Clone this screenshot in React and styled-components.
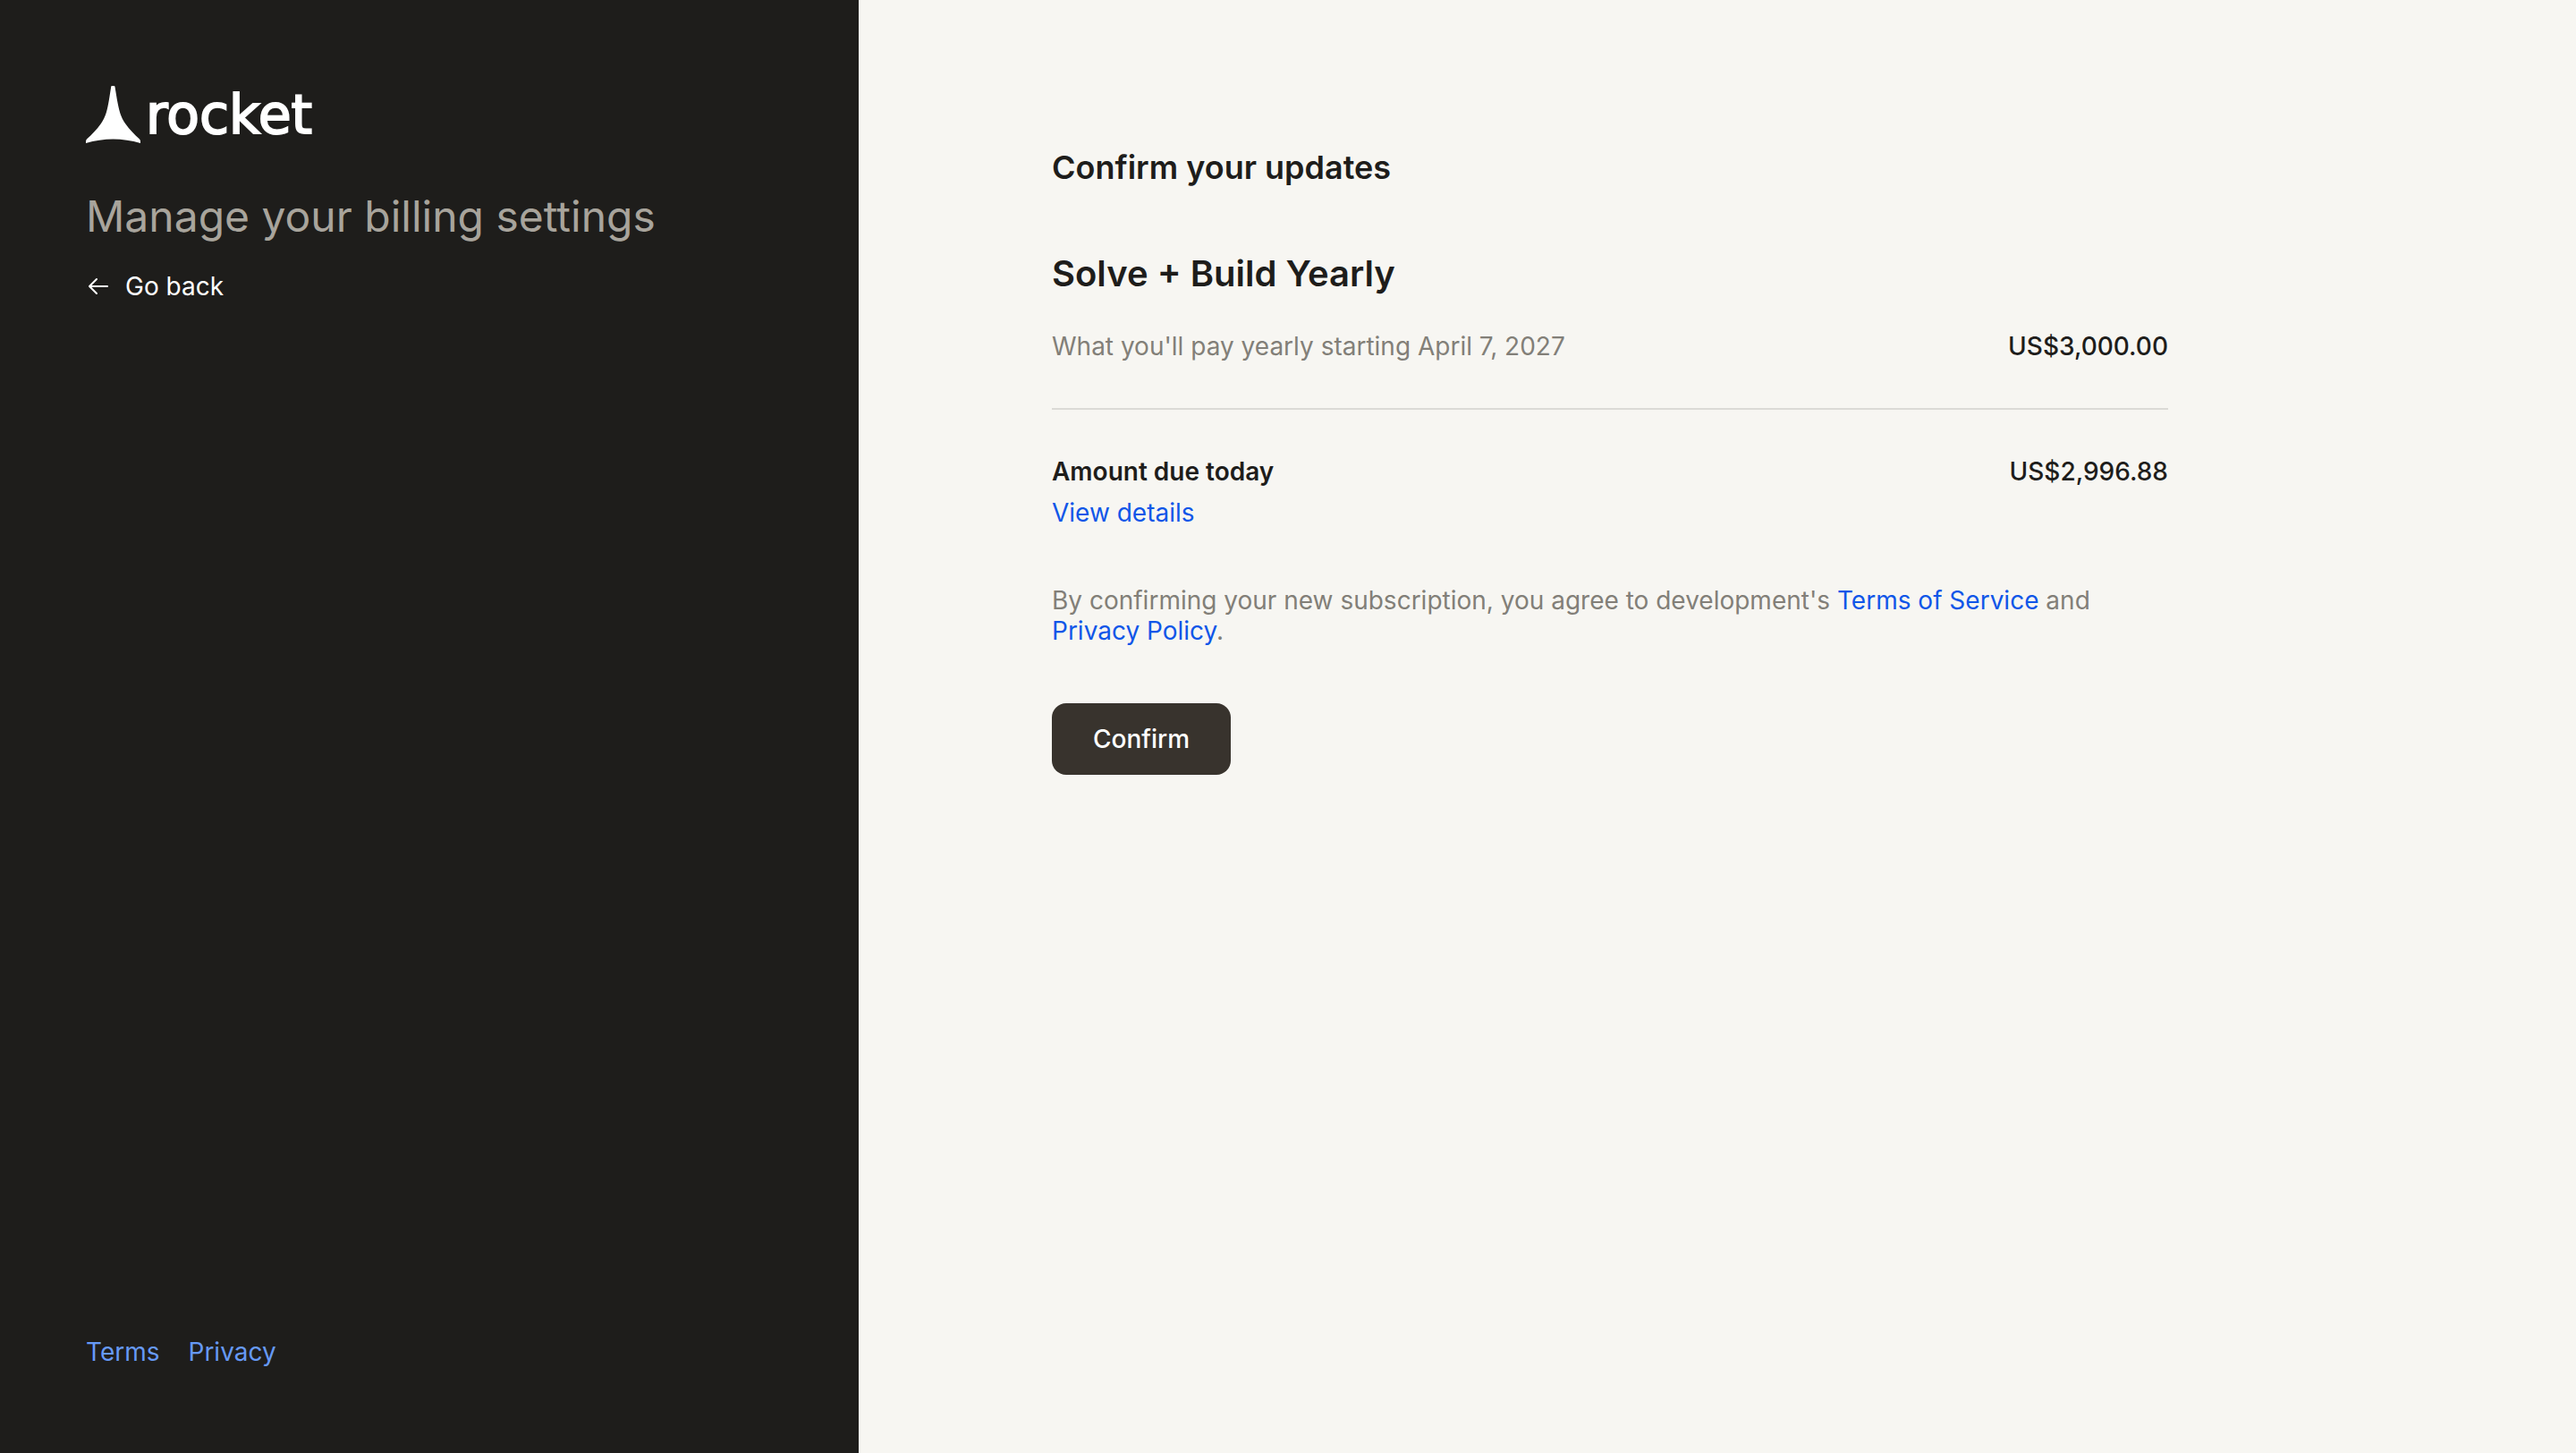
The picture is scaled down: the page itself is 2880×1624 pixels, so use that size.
import React from "react";
import styled, { createGlobalStyle } from "styled-components";

const GlobalStyle = createGlobalStyle`
  *, *::before, *::after { box-sizing: border-box; }
  body {
    margin: 0;
    background: #f7f6f2;
    color: #1e1d1b;
    font-family: Inter, "Liberation Sans", sans-serif;
    font-size: 28px;
    line-height: 34px;
  }
  h1, h2, p, dl, dt, dd { margin: 0; }
`;

const Page = styled.div`
  display: grid;
  grid-template-columns: 1fr 2fr;
  min-height: 100vh;
`;

const Sidebar = styled.aside`
  display: flex;
  flex-direction: column;
  align-items: flex-start;
  padding: 96px;
  background: #1e1d1b;
  color: #ffffff;
`;

const Brand = styled.div`
  display: flex;
  align-items: center;
  gap: 6px;
  height: 64px;
`;

const BrandName = styled.span`
  font-family: "DejaVu Sans", sans-serif;
  font-size: 60px;
  line-height: 64px;
  -webkit-text-stroke: 2px currentColor;
`;

const SidebarTitle = styled.h1`
  margin-top: 53px;
  color: #a8a49c;
  font-size: 48px;
  font-weight: 400;
  line-height: 58px;
`;

const Link = styled.a`
  color: ${({ $onDark }) => ($onDark ? "#6699f5" : "#1056e8")};
  text-decoration: none;
`;

const BackLink = styled.a`
  display: flex;
  align-items: center;
  gap: 16px;
  margin-top: 32px;
  color: #ffffff;
  text-decoration: none;
`;

const SidebarFooter = styled.footer`
  display: flex;
  gap: 32px;
  margin-top: auto;
`;

const Main = styled.main`
  padding: 164px 0 96px 216px;
`;

const Content = styled.div`
  width: 100%;
  max-width: 1248px;
`;

const Heading = styled.h2`
  font-size: 36px;
  font-weight: 600;
  line-height: 46px;
`;

const PlanName = styled.h2`
  margin: 72px 0 40px;
  font-size: 40px;
  font-weight: 600;
  line-height: 48px;
`;

const PriceRow = styled.dl`
  display: flex;
  justify-content: space-between;
`;

const Label = styled.dt`
  color: ${({ $strong }) => ($strong ? "#1e1d1b" : "#827f78")};
  font-weight: ${({ $strong }) => ($strong ? 600 : 400)};
`;

const Amount = styled.dd`
  font-weight: 500;
`;

const Divider = styled.hr`
  height: 2px;
  margin: 52px 0;
  border: 0;
  background: #dbdad6;
`;

const DetailsButton = styled.button`
  display: block;
  margin: 12px 0 64px;
  padding: 0;
  border: 0;
  background: none;
  color: #1056e8;
  font: inherit;
  cursor: pointer;
`;

const Agreement = styled.p`
  color: #827f78;
`;

const ConfirmButton = styled.button`
  width: 200px;
  height: 80px;
  margin-top: 64px;
  border: 0;
  border-radius: 16px;
  background: #38332d;
  color: #ffffff;
  font: inherit;
  font-weight: 500;
  cursor: pointer;
`;

function RocketMark() {
  return (
    <svg width="61" height="64" viewBox="0 0 61 64" fill="#ffffff" aria-hidden="true">
      <path d="M29 0H31.6Q32.3 0 32.5 1L34.8 15C37 27 39 35 44 42C49 49 54 54 60 59.5Q61 60.5 61 62V64C41 58 20 58 0 64V62Q0 60.5 1 59.5C7 54 12 49 17 42C22 35 24 27 26 15L28.2 1Q28.3 0 29 0Z" />
    </svg>
  );
}

function ArrowLeft() {
  return (
    <svg
      width="28"
      height="28"
      viewBox="0 0 28 28"
      fill="none"
      stroke="currentColor"
      strokeWidth="2"
      strokeLinecap="round"
      strokeLinejoin="round"
      aria-hidden="true"
    >
      <path d="M24 14H4M12 6L4 14L12 22" />
    </svg>
  );
}

export default function App() {
  return (
    <>
      <GlobalStyle />
      <Page>
        <Sidebar>
          <Brand>
            <RocketMark />
            <BrandName>rocket</BrandName>
          </Brand>
          <SidebarTitle>Manage your billing settings</SidebarTitle>
          <BackLink href="#back">
            <ArrowLeft />
            Go back
          </BackLink>
          <SidebarFooter>
            <Link $onDark href="#terms">Terms</Link>
            <Link $onDark href="#privacy">Privacy</Link>
          </SidebarFooter>
        </Sidebar>
        <Main>
          <Content>
            <Heading>Confirm your updates</Heading>
            <PlanName>Solve + Build Yearly</PlanName>
            <PriceRow>
              <Label>What you'll pay yearly starting April 7, 2027</Label>
              <Amount>US$3,000.00</Amount>
            </PriceRow>
            <Divider />
            <PriceRow>
              <Label $strong>Amount due today</Label>
              <Amount>US$2,996.88</Amount>
            </PriceRow>
            <DetailsButton type="button">View details</DetailsButton>
            <Agreement>
              By confirming your new subscription, you agree to development's{" "}
              <Link href="#terms-of-service">Terms of Service</Link> and{" "}
              <Link href="#privacy-policy">Privacy Policy</Link>.
            </Agreement>
            <ConfirmButton type="button">Confirm</ConfirmButton>
          </Content>
        </Main>
      </Page>
    </>
  );
}
